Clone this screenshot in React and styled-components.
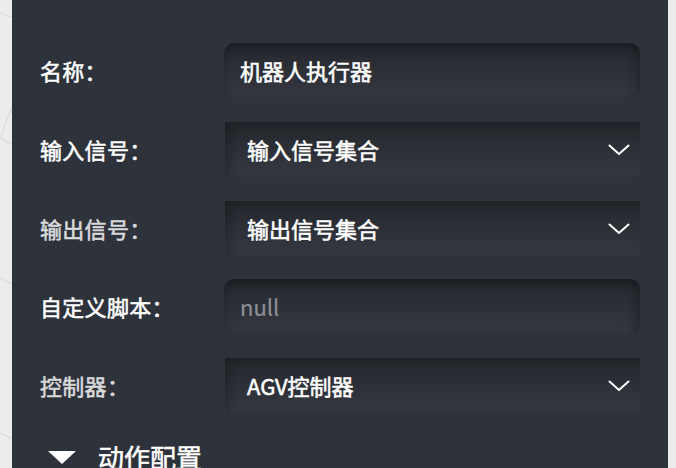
import React from 'react';
import styled, { createGlobalStyle } from 'styled-components';

const GlobalStyle = createGlobalStyle`
  html, body {
    margin: 0;
    padding: 0;
    background: #ececec;
    font-family: "Noto Sans CJK SC", "Noto Sans", sans-serif;
  }
  #root {
    width: 676px;
    height: 468px;
    overflow: hidden;
  }
`;

const fields = [
  { label: '名称：', type: 'input', value: '机器人执行器' },
  { label: '输入信号：', type: 'select', value: '输入信号集合' },
  { label: '输出信号：', type: 'select', value: '输出信号集合', dim: true },
  { label: '自定义脚本：', type: 'input', value: 'null', placeholder: true },
  { label: '控制器：', type: 'select', value: 'AGV控制器', dim: true },
];

const Chevron = () => (
  <svg width="22" height="12" viewBox="0 0 22 12" fill="none">
    <path d="M1.5 1.5 L11 10 L20.5 1.5" stroke="#ffffff" strokeWidth="2" strokeLinecap="round" strokeLinejoin="round" />
  </svg>
);

const CanvasEdge = () => (
  <svg width="12" height="468" viewBox="0 0 12 468">
    <g stroke="#d6d6d6" strokeWidth="1" fill="none">
      <path d="M0 13 L12 17" />
      <path d="M12 107 L0 138 L12 144" />
      <path d="M0 278 L12 284" />
      <path d="M0 433 L12 439" />
    </g>
  </svg>
);

const App = () => {
  return (
    <>
      <GlobalStyle />
      <StPage>
        <StEdge><CanvasEdge /></StEdge>
        <StPanel>
          <StForm>
            {fields.map((f) => (
              <React.Fragment key={f.label}>
                <StLabel dim={f.dim}>{f.label}</StLabel>
                {f.type === 'input' ? (
                  <StInputBox>
                    <StValue placeholder={f.placeholder}>{f.value}</StValue>
                  </StInputBox>
                ) : (
                  <StSelectBox>
                    <StValue>{f.value}</StValue>
                    <Chevron />
                  </StSelectBox>
                )}
              </React.Fragment>
            ))}
          </StForm>
          <StSectionHeader>
            <StTriangle />
            <StSectionTitle>动作配置</StSectionTitle>
          </StSectionHeader>
        </StPanel>
        <StEdge narrow />
      </StPage>
    </>
  );
};

export default App;

const StPage = styled.div`
  display: flex;
  width: 676px;
  height: 468px;
`;

const StEdge = styled.div`
  flex: 0 0 ${(p) => (p.narrow ? '8px' : '12px')};
  background: #ececec;
  svg { display: block; }
`;

const StPanel = styled.div`
  flex: 0 0 656px;
  background: #2e333b;
  padding: 43px 28px 0 28px;
  box-sizing: border-box;
`;

const StForm = styled.div`
  display: grid;
  grid-template-columns: 184px 1fr;
  grid-auto-rows: 56px;
  row-gap: 22.75px;
  align-items: center;
`;

const StLabel = styled.div`
  font-size: 22px;
  line-height: 1;
  padding-bottom: 2px;
  font-weight: 400;
  -webkit-text-stroke: 0.55px currentColor;
  color: ${(p) => (p.dim ? '#d9dadc' : '#ffffff')};
  white-space: nowrap;
  letter-spacing: 0.3px;
`;

const StInputBox = styled.div`
  height: 56px;
  border-radius: 10px;
  display: flex;
  align-items: center;
  padding-left: 16px;
  background: linear-gradient(180deg, #24272d 0%, #2c2f36 45%, #353840 100%);
  box-shadow: inset 0 5px 8px rgba(0, 0, 0, 0.22), inset -6px 0 10px rgba(0, 0, 0, 0.12);
`;

const StSelectBox = styled.div`
  height: 56px;
  margin-left: 1px;
  display: flex;
  align-items: center;
  justify-content: space-between;
  padding: 0 10px 0 22px;
  background: linear-gradient(180deg, #222529 0%, #2b2e35 40%, #363941 100%);
  box-shadow: inset 5px 0 8px rgba(0, 0, 0, 0.2);
  svg { display: block; }
`;

const StValue = styled.span`
  font-size: 22px;
  line-height: 1;
  padding-bottom: 2px;
  font-weight: 400;
  -webkit-text-stroke: ${(p) => (p.placeholder ? '0.2px' : '0.55px')} currentColor;
  color: ${(p) => (p.placeholder ? '#8c8f95' : '#ffffff')};
`;

const StSectionHeader = styled.div`
  display: flex;
  align-items: center;
  margin-top: 25px;
  padding-left: 8px;
`;

const StTriangle = styled.div`
  width: 0;
  height: 0;
  border-left: 14px solid transparent;
  border-right: 14px solid transparent;
  border-top: 13px solid #ffffff;
  margin-right: 22px;
`;

const StSectionTitle = styled.div`
  font-size: 26px;
  font-weight: 400;
  -webkit-text-stroke: 0.5px currentColor;
  color: #ffffff;
  line-height: 36px;
`;
